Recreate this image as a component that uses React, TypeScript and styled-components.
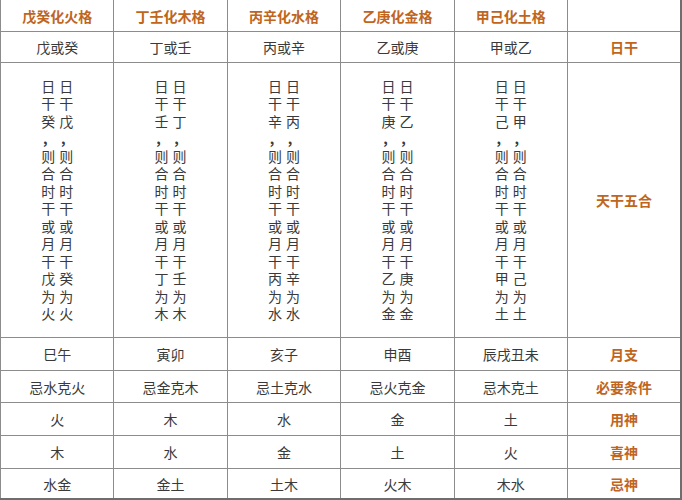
import styled, { createGlobalStyle } from 'styled-components';

const GlobalStyle = createGlobalStyle`
  html, body {
    margin: 0;
    padding: 0;
    background: #ffffff;
  }
  body {
    font-family: "Noto Sans CJK SC", "Noto Sans", sans-serif;
  }
`;

const Table = styled.table`
  width: 682px;
  border-collapse: collapse;
  table-layout: fixed;
  border-right: 2px solid #6e6e6e;
  border-bottom: 2px solid #6e6e6e;
`;

const Cell = styled.td<{ $h: number; $label?: boolean }>`
  height: ${(p) => p.$h}px;
  padding: 0;
  border: 1px solid #8c8c8c;
  text-align: center;
  vertical-align: middle;
  font-size: 14px;
  line-height: 1;
  color: ${(p) => (p.$label ? '#c0651e' : '#3a3a3a')};
  font-weight: ${(p) => (p.$label ? 700 : 400)};
`;

const HeadCell = styled.th`
  height: 31px;
  padding: 0;
  border: 1px solid #8c8c8c;
  border-top: none;
  text-align: center;
  vertical-align: middle;
  font-size: 14px;
  line-height: 1;
  font-weight: 700;
  color: #c0651e;
`;

const Vertical = styled.div`
  display: flex;
  flex-direction: row-reverse;
  justify-content: center;
  gap: 3px;
`;

const VColumn = styled.div`
  display: flex;
  flex-direction: column;
  align-items: center;
  width: 15px;
`;

const VChar = styled.span<{ $comma?: boolean }>`
  display: block;
  height: 17.5px;
  line-height: 17.5px;
  font-size: 14px;
  color: #3a3a3a;
  ${(p) => (p.$comma ? 'font-weight: 700; transform: translateX(-3px);' : '')}
`;

const heads = ['戊癸化火格', '丁壬化木格', '丙辛化水格', '乙庚化金格', '甲己化土格', ''];

const pairs: { a: string; b: string; el: string; day: string }[] = [
  { a: '戊', b: '癸', el: '火', day: '戊或癸' },
  { a: '丁', b: '壬', el: '木', day: '丁或壬' },
  { a: '丙', b: '辛', el: '水', day: '丙或辛' },
  { a: '乙', b: '庚', el: '金', day: '乙或庚' },
  { a: '甲', b: '己', el: '土', day: '甲或乙' },
];

const rows: { h: number; cells: string[]; label: string }[] = [
  { h: 32, cells: ['巳午', '寅卯', '亥子', '申酉', '辰戌丑未'], label: '月支' },
  { h: 31, cells: ['忌水克火', '忌金克木', '忌土克水', '忌火克金', '忌木克土'], label: '必要条件' },
  { h: 32, cells: ['火', '木', '水', '金', '土'], label: '用神' },
  { h: 32, cells: ['木', '水', '金', '土', '火'], label: '喜神' },
  { h: 29, cells: ['水金', '金土', '土木', '火木', '木水'], label: '忌神' },
];

function VText({ lines }: { lines: string[] }) {
  return (
    <Vertical>
      {lines.map((line, i) => (
        <VColumn key={i}>
          {Array.from(line).map((ch, j) => (
            <VChar key={j} $comma={ch === ','}>
              {ch}
            </VChar>
          ))}
        </VColumn>
      ))}
    </Vertical>
  );
}

export default function App() {
  return (
    <>
      <GlobalStyle />
      <Table>
        <thead>
          <tr>
            {heads.map((h, i) => (
              <HeadCell key={i}>{h}</HeadCell>
            ))}
          </tr>
        </thead>
        <tbody>
          <tr>
            {pairs.map((p) => (
              <Cell key={p.a} $h={30}>
                {p.day}
              </Cell>
            ))}
            <Cell $h={30} $label>
              日干
            </Cell>
          </tr>
          <tr>
            {pairs.map(({ a, b, el }) => (
              <Cell key={a} $h={274}>
                <VText
                  lines={[
                    `日干${a},则合时干或月干${b}为${el}`,
                    `日干${b},则合时干或月干${a}为${el}`,
                  ]}
                />
              </Cell>
            ))}
            <Cell $h={274} $label>
              天干五合
            </Cell>
          </tr>
          {rows.map((r) => (
            <tr key={r.label}>
              {r.cells.map((c, i) => (
                <Cell key={i} $h={r.h}>
                  {c}
                </Cell>
              ))}
              <Cell $h={r.h} $label>
                {r.label}
              </Cell>
            </tr>
          ))}
        </tbody>
      </Table>
    </>
  );
}
